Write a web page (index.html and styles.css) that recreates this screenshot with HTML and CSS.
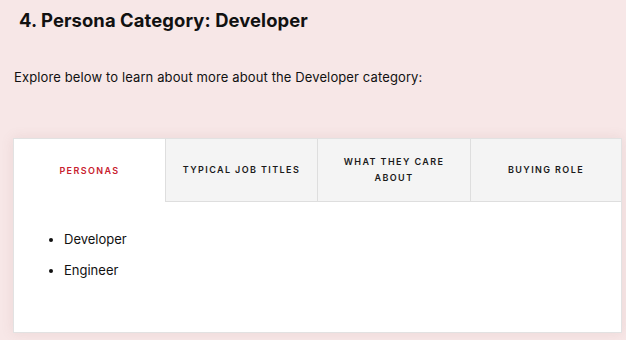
FILE: index.html
```html
<!DOCTYPE html>
<html lang="en">
<head>
<meta charset="utf-8">
<link rel="stylesheet" href="styles.css">
</head>
<body>
<main class="page">
  <h2 class="title">4. Persona Category: Developer</h2>
  <p class="intro">Explore below to learn about more about the Developer category:</p>
  <section class="tabs">
    <div class="tab-bar">
      <div class="tab active">PERSONAS</div>
      <div class="tab">TYPICAL JOB TITLES</div>
      <div class="tab">WHAT THEY CARE<br>ABOUT</div>
      <div class="tab">BUYING ROLE</div>
    </div>
    <div class="panel">
      <ul class="list">
        <li>Developer</li>
        <li>Engineer</li>
      </ul>
    </div>
  </section>
</main>
</body>
</html>
```
FILE: styles.css
```css
html, body {
  margin: 0;
  padding: 0;
}
body {
  background: #f7e7e7;
  font-family: Inter, "Noto Sans", sans-serif;
  color: #111;
  width: 626px;
  height: 340px;
  overflow: hidden;
}
.page {
  padding: 0 4px 0 13px;
}
.title {
  margin: 0;
  padding: 9px 0 0 6px;
  font-size: 18.4px;
  font-weight: 700;
  line-height: 22px;
  letter-spacing: 0.1px;
}
.intro {
  margin: 38px 0 0 1px;
  font-size: 13px;
  line-height: 16px;
  font-weight: 400;
  letter-spacing: 0.12px;
}
.tabs {
  margin-top: 53px;
  width: 609px;
  height: 195px;
  box-sizing: border-box;
  background: #fff;
  border: 1px solid #e2e2e2;
  box-shadow: 0 0 12px rgba(150, 90, 90, 0.12);
  display: flex;
  flex-direction: column;
}
.tab-bar {
  display: grid;
  grid-template-columns: 151px 152px 153px 1fr;
  height: 63px;
}
.tab {
  display: flex;
  align-items: center;
  justify-content: center;
  text-align: center;
  background: #f4f4f4;
  border-left: 1px solid #dedede;
  border-bottom: 1px solid #dedede;
  font-size: 9px;
  font-weight: 600;
  letter-spacing: 1.4px;
  line-height: 16px;
  color: #1a1a1a;
}
.tab.active {
  background: #fff;
  border-left: none;
  border-bottom: none;
  color: #c8202e;
}
.panel {
  flex: 1;
  padding: 29px 0 0 0;
}
.list {
  margin: 0;
  padding-left: 50px;
  font-size: 13px;
  line-height: 16px;
}
.list li {
  margin-bottom: 15px;
}
```
